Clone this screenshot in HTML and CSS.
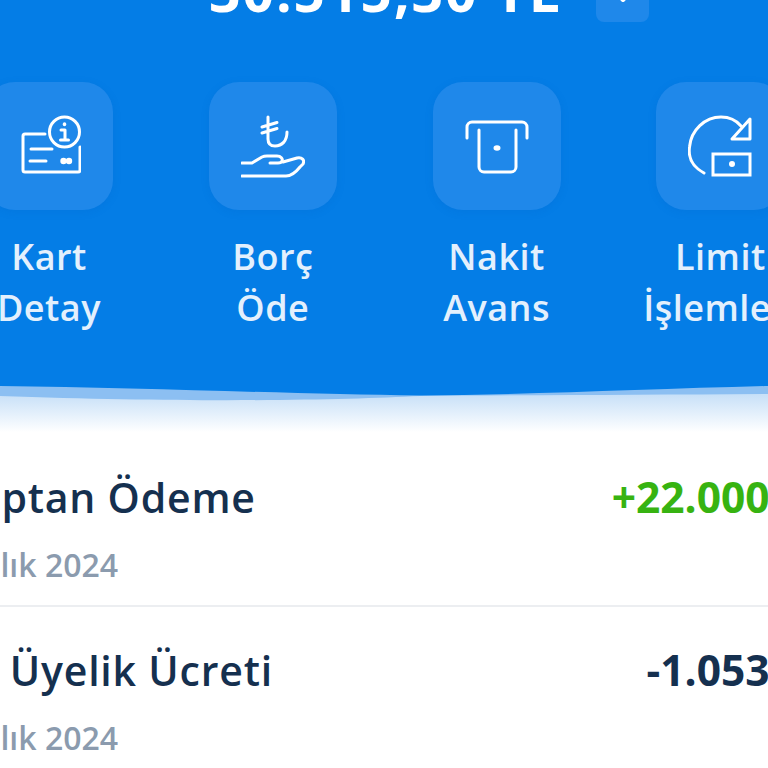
FILE: index.html
```html
<!DOCTYPE html>
<html lang="tr">
  <head>
    <meta charset="UTF-8" />
    <meta name="viewport" content="width=device-width, initial-scale=1.0" />
    <title>Kart Detay</title>
    <link rel="stylesheet" href="styles.css">
  </head>
  <body>
    <div class="page">
      <!-- Blue card header -->
      <section class="hero">
        <div class="balance">
          <span class="balance-value">30.515,30 TL</span>
          <span class="balance-toggle">
            <svg width="22" height="14" viewBox="0 0 22 14"><path d="M5 0l6 6 6-6" fill="none" stroke="#fff" stroke-width="4" stroke-linecap="round" stroke-linejoin="round"/></svg>
          </span>
        </div>

        <div class="actions">
          <div class="action">
            <div class="tile">
              <svg class="icon" width="64" height="64" viewBox="0 0 64 64">
                <path d="M28 20H8a2 2 0 0 0-2 2v34a2 2 0 0 0 2 2h53a2 2 0 0 0 2-2V33"/>
                <circle cx="47.500" cy="18" r="15"/>
                <path d="M44 16h4v10M43.500 26h8M14 35h21M13 47h16"/>
                <path d="M47.500 10v.5" stroke-width="3.500"/>
                <circle cx="46.500" cy="47" r="3.200" class="dot"/>
                <circle cx="52" cy="47" r="3.200" class="dot"/>
              </svg>
            </div>
            <div class="action-label">Kart<br>Detay</div>
          </div>

          <div class="action">
            <div class="tile">
              <svg class="icon" width="64" height="64" viewBox="0 0 64 64">
                <path d="M27 3v22c0 5 3 7 7 7 7 0 12-5 12-14M21 13l15-4.500M21 19l15-4.500"/>
                <path d="M1 49h10l10-6c2-1 3-1 5-1h10c4 0 6 3 5 5-.5 1.500-2 2-4 2H29"/>
                <path d="M42 48l14-4c5-1 8 2 6 6l-3 3c-4 5-8 9-14 9H1"/>
              </svg>
            </div>
            <div class="action-label">Borç<br>Öde</div>
          </div>

          <div class="action">
            <div class="tile">
              <svg class="icon" width="64" height="64" viewBox="0 0 64 64">
                <path d="M2 24V13a5 5 0 0 1 5-5h50a5 5 0 0 1 5 5v11"/>
                <path d="M14 16v37a5 5 0 0 0 5 5h27a5 5 0 0 0 5-5V16"/>
                <ellipse cx="32" cy="34" rx="3.500" ry="2.800" class="dot"/>
              </svg>
            </div>
            <div class="action-label">Nakit<br>Avans</div>
          </div>

          <div class="action">
            <div class="tile">
              <svg class="icon" width="64" height="64" viewBox="0 0 64 64">
                <path d="M16 59C5 53 0 44 1.500 33 3 16 17 3 33 3c8 0 15 3 20 9"/>
                <path d="M62 5v20H44z"/>
                <rect class="square" x="25" y="40" width="37" height="21"/>
                <circle cx="44" cy="50" r="3" class="dot"/>
              </svg>
            </div>
            <div class="action-label">Limit<br>İşlemleri</div>
          </div>
        </div>

        <svg class="wave" width="768" height="16" viewBox="0 0 768 16">
          <path d="M0 0H768V8C650 9 520 9 420 10 340 14 200 17 0 10z" fill="#8cbff2"/>
          <path d="M0 0H768C650 3 520 9 420 9.500 300 8 150 2 0 0z" fill="#047de6"/>
        </svg>
      </section>

      <div class="fade"></div>

      <!-- Transactions -->
      <div class="row">
        <div>
          <div class="row-title">Hesaptan Ödeme</div>
          <div class="row-date">16 Aralık 2024</div>
        </div>
        <div class="row-amount positive">+22.000,00 TL</div>
      </div>
      <div class="row">
        <div>
          <div class="row-title">Yıllık Üyelik Ücreti</div>
          <div class="row-date">16 Aralık 2024</div>
        </div>
        <div class="row-amount">-1.053,00 TL</div>
      </div>
    </div>
  </body>
</html>
```
FILE: styles.css
```css
html,
body {
  margin: 0;
  padding: 0;
  height: 768px;
  overflow: hidden;
  background-color: #fff;
}

body {
  font-family: "Open Sans", "Noto Sans", sans-serif;
}

.page {
  width: 768px;
  overflow: hidden;
}

.hero {
  height: 386px;
  background-color: #047de6;
  position: relative;
}

.balance {
  height: 22px;
  display: flex;
  align-items: flex-end;
  padding-left: 209px;
  overflow: hidden;
}

.balance-value {
  flex: none;
  width: 387px;
  font-size: 55px;
  line-height: 60px;
  margin-bottom: 1px;
  letter-spacing: 2px;
  font-weight: 700;
  color: #fff;
  white-space: nowrap;
}

.balance-toggle {
  flex: none;
  width: 53px;
  height: 40px;
  background-color: #1f88ea;
  border-radius: 8px;
  display: flex;
  align-items: flex-end;
  justify-content: center;
  padding-bottom: 14px;
  box-sizing: border-box;
}

.actions {
  display: flex;
  gap: 95.800px;
  margin: 60px 0 0 -15px;
}

.action {
  flex: none;
  width: 128px;
  display: flex;
  flex-direction: column;
  align-items: center;
}

.tile {
  width: 128px;
  height: 128px;
  border-radius: 30px;
  background-color: #1f88ea;
  box-shadow: 0 2px 8px rgba(0, 80, 180, 0.12);
  display: flex;
  align-items: center;
  justify-content: center;
}

.icon {
  fill: none;
  stroke: #fff;
  stroke-width: 3;
  stroke-linecap: round;
  stroke-linejoin: round;
}

.icon .dot {
  fill: #fff;
  stroke: none;
}

.icon .square {
  stroke-linejoin: miter;
}

.action-label {
  margin-top: 21px;
  font-size: 36px;
  line-height: 51px;
  font-weight: 600;
  letter-spacing: 0.500px;
  color: #e3f0fd;
  text-align: center;
  white-space: nowrap;
}

.wave {
  position: absolute;
  left: 0;
  top: 100%;
  display: block;
}

.fade {
  height: 48px;
  background: linear-gradient(#c9e1f8 20%, #fff 96%);
}

.row {
  width: 990px;
  margin-left: -100px;
  height: 173px;
  box-sizing: border-box;
  padding-top: 38px;
  display: flex;
  justify-content: space-between;
  border-bottom: 2px solid #eceef1;
}

.row-title {
  font-size: 41px;
  line-height: 50px;
  font-weight: 600;
  letter-spacing: 0.800px;
  color: #15304f;
}

.row-date {
  margin: 23px 0 0 2px;
  font-size: 32px;
  line-height: 40px;
  font-weight: 600;
  color: #8b9bae;
}

.row-amount {
  font-size: 42.500px;
  line-height: 50px;
  font-weight: 700;
  color: #15304f;
}

.positive {
  color: #37b311;
}
```
